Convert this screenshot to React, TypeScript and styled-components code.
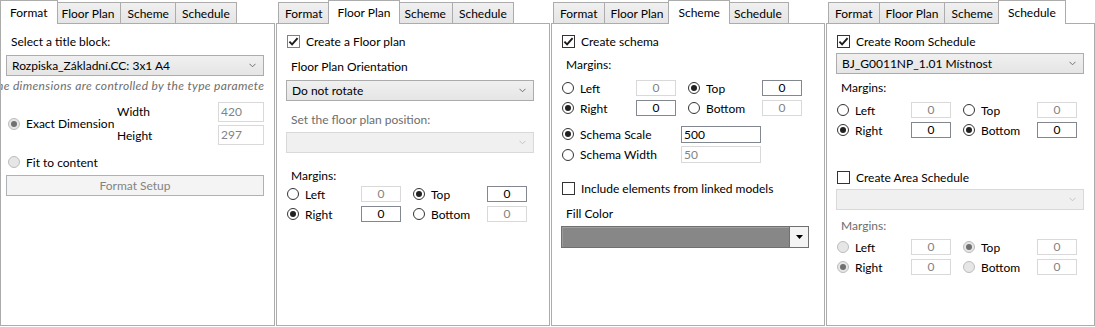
import styled, { createGlobalStyle, css } from "styled-components";

const TABS = ["Format", "Floor Plan", "Scheme", "Schedule"];

const GlobalStyle = createGlobalStyle`
  body {
    margin: 0;
    background: #fff;
    font-family: Lato, "Liberation Sans", sans-serif;
    font-size: 12px;
    color: #000;
  }
`;

const Page = styled.div`
  display: grid;
  grid-template-columns: 275px 274px 274px 1fr;
  column-gap: 1px;
  width: 1095px;
  height: 327px;
`;

const Panel = styled.section`
  display: flex;
  flex-direction: column;
  height: 326px;
  min-width: 0;
`;

const TabStrip = styled.div`
  display: flex;
  align-items: flex-end;
  height: 23px;
  padding: 0 2px;
`;

const Tab = styled.div<{ $active?: boolean }>`
  box-sizing: border-box;
  height: 21px;
  padding: 0 6px;
  display: flex;
  align-items: center;
  border: 1px solid #acacac;
  border-bottom: none;
  background: linear-gradient(#f0f0f0, #e5e5e5);
  white-space: nowrap;

  & + & {
    margin-left: -1px;
  }

  ${(p) =>
    p.$active &&
    css`
      &&& {
        position: relative;
        z-index: 2;
        height: 24px;
        margin: 0 -2px -1px -2px;
        padding: 0 9px 1px;
        background: #fff;
      }
    `}
`;

const Body = styled.div<{ $left: number; $right: number }>`
  flex: 1;
  display: flex;
  flex-direction: column;
  border: 1px solid #acacac;
  background: #fff;
  overflow: hidden;
  padding: 0 ${(p) => p.$right}px 0 ${(p) => p.$left}px;
`;

const Caption = styled.div<{ $mt?: number; $muted?: boolean }>`
  flex-shrink: 0;
  height: 16px;
  line-height: 16px;
  padding-left: 5px;
  margin-top: ${(p) => p.$mt ?? 0}px;
  color: ${(p) => (p.$muted ? "#6d6d6d" : "#000")};
`;

const Hint = styled.div`
  flex-shrink: 0;
  display: flex;
  justify-content: center;
  height: 16px;
  line-height: 16px;
  margin: 2px 0 0 -6px;
  overflow: hidden;
  white-space: nowrap;
  font-style: italic;
  letter-spacing: 0.35px;
  color: #6d6d6d;
`;

const ComboBox = styled.div<{ $mt?: number; $disabled?: boolean }>`
  flex-shrink: 0;
  box-sizing: border-box;
  height: 21px;
  margin-top: ${(p) => p.$mt ?? 0}px;
  padding: 0 7px 0 5px;
  display: flex;
  align-items: center;
  justify-content: space-between;
  border: 1px solid ${(p) => (p.$disabled ? "#d9d9d9" : "#acacac")};
  background: ${(p) =>
    p.$disabled ? "#f0f0f0" : "linear-gradient(#f0f0f0, #e5e5e5)"};
  color: #000;
`;

const ColorPicker = styled.div<{ $mt?: number }>`
  flex-shrink: 0;
  box-sizing: border-box;
  height: 22px;
  margin-top: ${(p) => p.$mt ?? 0}px;
  display: flex;
  border: 1px solid #707070;
  background: #878787;
`;

const Swatch = styled.div`
  flex: 1;
  border-top: 1px solid #a0a0a0;
  border-left: 1px solid #9a9a9a;
`;

const DropButton = styled.div`
  width: 18px;
  display: flex;
  align-items: center;
  justify-content: center;
  border-left: 1px solid #707070;
  background: #f4f4f4;
`;

const CheckRow = styled.div<{ $mt?: number }>`
  flex-shrink: 0;
  display: flex;
  align-items: center;
  gap: 6px;
  height: 16px;
  padding-left: 1px;
  margin-top: ${(p) => p.$mt ?? 0}px;
`;

const CheckBox = styled.span<{ $focused?: boolean }>`
  box-sizing: border-box;
  width: 13px;
  height: 13px;
  display: flex;
  align-items: center;
  justify-content: center;
  border: 1px solid ${(p) => (p.$focused ? "#3d8ee6" : "#333")};
  background: #fff;
`;

const RadioOption = styled.div<{ $indent?: number }>`
  display: flex;
  align-items: center;
  gap: 6px;
  height: 16px;
  padding-left: ${(p) => p.$indent ?? 1}px;
  white-space: nowrap;
`;

const RadioGlyph = styled.span<{ $checked?: boolean; $muted?: boolean }>`
  position: relative;
  flex-shrink: 0;
  box-sizing: border-box;
  width: 12px;
  height: 12px;
  border-radius: 50%;
  border: 1px solid ${(p) => (p.$muted ? "#bcbcbc" : "#333")};
  background: ${(p) => (p.$muted ? "#e6e6e6" : "#fff")};

  &::after {
    content: "";
    display: ${(p) => (p.$checked ? "block" : "none")};
    position: absolute;
    inset: 2px;
    border-radius: 50%;
    background: ${(p) => (p.$muted ? "#707070" : "#212121")};
  }
`;

const Field = styled.div<{
  $disabled?: boolean;
  $width?: number;
  $height?: number;
  $center?: boolean;
}>`
  box-sizing: border-box;
  width: ${(p) => p.$width ?? 40}px;
  height: ${(p) => p.$height ?? 16}px;
  line-height: ${(p) => (p.$height ?? 16) - 2}px;
  padding: 0 2px;
  border: 1px solid ${(p) => (p.$disabled ? "#d9d9d9" : "#828790")};
  background: #fff;
  color: ${(p) => (p.$disabled ? "#838383" : "#000")};
  text-align: ${(p) => (p.$center ? "center" : "left")};
`;

const MarginGrid = styled.div<{ $mt?: number }>`
  flex-shrink: 0;
  display: grid;
  grid-template-columns: 75px 40px 86px 40px;
  grid-auto-rows: 20px;
  align-items: center;
  margin-top: ${(p) => p.$mt ?? 0}px;
`;

const ScaleGrid = styled.div`
  flex-shrink: 0;
  display: grid;
  grid-template-columns: 120px 80px;
  grid-template-rows: 20px 21px;
  align-items: center;
  margin-top: 6px;
`;

const DimensionGrid = styled.div`
  flex-shrink: 0;
  display: grid;
  grid-template-columns: 111px 1fr 46px;
  grid-template-rows: 23px 24px;
  align-items: center;
  margin-top: 6px;

  & > :first-child {
    grid-row: 1 / span 2;
  }
`;

const Button = styled.div`
  flex-shrink: 0;
  box-sizing: border-box;
  height: 21px;
  margin-top: 5px;
  display: flex;
  align-items: center;
  justify-content: center;
  border: 1px solid #adb2b5;
  background: #f4f4f4;
  color: #838383;
`;

const Chevron = ({ disabled }: { disabled?: boolean }) => (
  <svg width="7" height="5" viewBox="0 0 7 5">
    <polyline
      points="0.5,0.8 3.5,3.8 6.5,0.8"
      fill="none"
      stroke={disabled ? "#c4c4c4" : "#707070"}
      strokeWidth="1"
    />
  </svg>
);

const Combo = ({
  value,
  disabled,
  mt,
}: {
  value?: string;
  disabled?: boolean;
  mt?: number;
}) => (
  <ComboBox $disabled={disabled} $mt={mt}>
    <span>{value}</span>
    <Chevron disabled={disabled} />
  </ComboBox>
);

const Check = ({
  label,
  checked,
  focused,
  mt,
}: {
  label: string;
  checked?: boolean;
  focused?: boolean;
  mt?: number;
}) => (
  <CheckRow $mt={mt}>
    <CheckBox $focused={focused}>
      {checked && (
        <svg width="11" height="11" viewBox="0 0 11 11">
          <path
            d="M1.4 5.6 L4.1 8.3 L9.6 2.2"
            fill="none"
            stroke="#1a1a1a"
            strokeWidth="1.9"
          />
        </svg>
      )}
    </CheckBox>
    {label}
  </CheckRow>
);

const Radio = ({
  label,
  checked,
  muted,
  indent,
}: {
  label: string;
  checked?: boolean;
  muted?: boolean;
  indent?: number;
}) => (
  <RadioOption $indent={indent}>
    <RadioGlyph $checked={checked} $muted={muted} />
    {label}
  </RadioOption>
);

interface MarginProps {
  first: "Left" | "Right";
  second: "Top" | "Bottom";
  muted?: boolean;
  mt?: number;
}

const MarginRows = ({ first, second, muted, mt }: MarginProps) => (
  <MarginGrid $mt={mt}>
    <Radio label="Left" checked={first === "Left"} muted={muted} />
    <Field $center $disabled={muted || first !== "Left"}>0</Field>
    <Radio label="Top" checked={second === "Top"} muted={muted} indent={12} />
    <Field $center $disabled={muted || second !== "Top"}>0</Field>
    <Radio label="Right" checked={first === "Right"} muted={muted} />
    <Field $center $disabled={muted || first !== "Right"}>0</Field>
    <Radio
      label="Bottom"
      checked={second === "Bottom"}
      muted={muted}
      indent={12}
    />
    <Field $center $disabled={muted || second !== "Bottom"}>0</Field>
  </MarginGrid>
);

const Tabs = ({ active }: { active: number }) => (
  <TabStrip>
    {TABS.map((t, i) => (
      <Tab key={t} $active={i === active}>
        {t}
      </Tab>
    ))}
  </TabStrip>
);

const FormatPanel = () => (
  <Panel>
    <Tabs active={0} />
    <Body $left={5} $right={10}>
      <Caption $mt={10}>Select a title block:</Caption>
      <Combo value="Rozpiska_Základní.CC: 3x1 A4" mt={5} />
      <Hint>
        <span>The dimensions are controlled by the type parameters</span>
      </Hint>
      <DimensionGrid>
        <Radio label="Exact Dimension" checked muted indent={2} />
        <span>Width</span>
        <Field $disabled $width={46} $height={20}>
          420
        </Field>
        <span>Height</span>
        <Field $disabled $width={46} $height={20}>
          297
        </Field>
      </DimensionGrid>
      <CheckRow $mt={7}>
        <Radio label="Fit to content" muted />
      </CheckRow>
      <Button>Format Setup</Button>
    </Body>
  </Panel>
);

const FloorPlanPanel = () => (
  <Panel>
    <Tabs active={1} />
    <Body $left={9} $right={15}>
      <Check label="Create a Floor plan" checked focused mt={9} />
      <Caption $mt={10}>Floor Plan Orientation</Caption>
      <Combo value="Do not rotate" mt={5} />
      <Caption $mt={11} $muted>
        Set the floor plan position:
      </Caption>
      <Combo disabled mt={4} />
      <Caption $mt={15}>Margins:</Caption>
      <MarginRows first="Right" second="Top" />
    </Body>
  </Panel>
);

const SchemePanel = () => (
  <Panel>
    <Tabs active={2} />
    <Body $left={9} $right={15}>
      <Check label="Create schema" checked mt={9} />
      <Caption $mt={8}>Margins:</Caption>
      <MarginRows first="Right" second="Top" mt={5} />
      <ScaleGrid>
        <Radio label="Schema Scale" checked />
        <Field $width={80} $height={17}>
          500
        </Field>
        <Radio label="Schema Width" />
        <Field $disabled $width={80} $height={17}>
          50
        </Field>
      </ScaleGrid>
      <Check label="Include elements from linked models" mt={15} />
      <Caption $mt={10}>Fill Color</Caption>
      <ColorPicker $mt={4}>
        <Swatch />
        <DropButton>
          <svg width="7" height="4" viewBox="0 0 7 4">
            <polygon points="0,0 7,0 3.5,4" fill="#000" />
          </svg>
        </DropButton>
      </ColorPicker>
    </Body>
  </Panel>
);

const SchedulePanel = () => (
  <Panel>
    <Tabs active={3} />
    <Body $left={9} $right={10}>
      <Check label="Create Room Schedule" checked mt={9} />
      <Combo value="BJ_G0011NP_1.01 Místnost" mt={4} />
      <Caption $mt={6}>Margins:</Caption>
      <MarginRows first="Right" second="Bottom" mt={4} />
      <Check label="Create Area Schedule" mt={29} />
      <Combo disabled mt={4} />
      <Caption $mt={8} $muted>
        Margins:
      </Caption>
      <MarginRows first="Right" second="Top" muted mt={3} />
    </Body>
  </Panel>
);

export default function App() {
  return (
    <>
      <GlobalStyle />
      <Page>
        <FormatPanel />
        <FloorPlanPanel />
        <SchemePanel />
        <SchedulePanel />
      </Page>
    </>
  );
}
